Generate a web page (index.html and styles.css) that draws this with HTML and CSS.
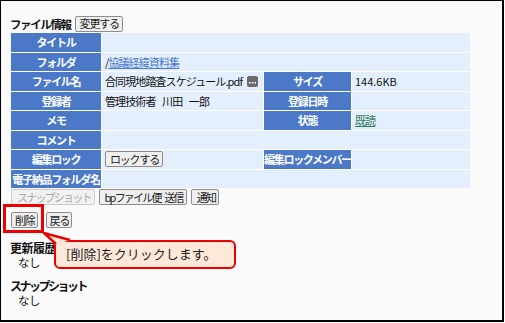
FILE: index.html
```html
<!DOCTYPE html>
<html lang="ja">
<head>
    <meta charset="UTF-8">
    <meta name="viewport" content="width=device-width, initial-scale=1.0">
    <title>ファイル情報</title>
    <link rel="stylesheet" href="styles.css">
</head>
<body>
    <div class="frame">
        <div class="head">
            <span class="head-title">ファイル情報</span>
            <button class="btn">変更する</button>
        </div>

        <div class="info">
            <div class="lbl">タイトル</div>
            <div class="val wide"></div>

            <div class="lbl">フォルダ</div>
            <div class="val wide">/<a class="link" href="#">協議経緯資料集</a></div>

            <div class="lbl">ファイル名</div>
            <div class="val">合同現地踏査スケジュール.pdf
                <svg class="more" width="11" height="11" viewBox="0 0 11 11">
                    <rect x="0" y="0" width="11" height="11" rx="2" fill="#6b6b6b"/>
                    <rect x="2" y="6" width="1.5" height="1.5" fill="#fff"/>
                    <rect x="4.75" y="6" width="1.5" height="1.5" fill="#fff"/>
                    <rect x="7.5" y="6" width="1.5" height="1.5" fill="#fff"/>
                </svg>
            </div>
            <div class="lbl">サイズ</div>
            <div class="val num">144.6KB</div>

            <div class="lbl">登録者</div>
            <div class="val">管理技術者 川田 一郎</div>
            <div class="lbl">登録日時</div>
            <div class="val"></div>

            <div class="lbl">メモ</div>
            <div class="val"></div>
            <div class="lbl">状態</div>
            <div class="val"><a class="link read" href="#">既読</a></div>

            <div class="lbl">コメント</div>
            <div class="val wide"></div>

            <div class="lbl">編集ロック</div>
            <div class="val"><button class="btn">ロックする</button></div>
            <div class="lbl">編集ロックメンバー</div>
            <div class="val"></div>

            <div class="lbl">電子納品フォルダ名</div>
            <div class="val wide"></div>
        </div>

        <div class="actions">
            <button class="btn" disabled>スナップショット</button>
            <button class="btn">bpファイル便 送信</button>
            <button class="btn">通知</button>
        </div>

        <div class="actions actions-main">
            <button class="btn">削除</button>
            <button class="btn">戻る</button>
        </div>

        <div class="sub">
            <h3>更新履歴</h3>
            <p>なし</p>
        </div>
        <div class="sub">
            <h3 class="kana">スナップショット</h3>
            <p>なし</p>
        </div>

        <!-- 操作説明のマーカー -->
        <div class="mark"></div>
        <svg class="tail" width="34" height="20" viewBox="0 0 34 20">
            <polygon points="2,1 14,13 28,8" fill="#fde8da"/>
            <polyline points="14,12 2,1 28,8" fill="none" stroke="#ee0000" stroke-width="2.4" stroke-linejoin="round"/>
        </svg>
        <div class="callout">[削除]をクリックします。</div>
    </div>
</body>
</html>
```

FILE: styles.css
```css
* {
    box-sizing: border-box;
}
body {
    margin: 0;
    font-family: "Noto Sans CJK JP", "Noto Sans", sans-serif;
    font-size: 11px;
    color: #111;
    background: #fff;
}
.frame {
    position: relative;
    width: 504px;
    height: 322px;
    border: 1px solid #000;
    border-right-width: 2px;
    border-bottom-width: 2px;
    background: #fafafa;
    padding: 14px 0 0 9px;
}
.head {
    display: flex;
    align-items: center;
    gap: 4px;
    height: 17px;
    margin-bottom: 1px;
}
.head-title {
    font-weight: bold;
    font-size: 11.5px;
    letter-spacing: -1.4px;
}
.btn {
    font-family: inherit;
    font-size: 11px;
    letter-spacing: -1.2px;
    word-spacing: 3px;
    line-height: 13px;
    height: 16px;
    padding: 0 3px 0 4px;
    color: #222;
    background: #efefef;
    border: 1px solid #8d8d8d;
    border-radius: 2px;
}
.btn:disabled {
    color: #a8a8a8;
    border-color: #cdcdcd;
    background: #f1f1f1;
}
.info {
    display: grid;
    grid-template-columns: 90px 161px 87px 118px;
    grid-auto-rows: 18.5px;
    gap: 1px;
    width: 459px;
    margin-left: 1px;
    background: #fff;
}
.lbl {
    background: #4b79c8;
    color: #fff;
    font-weight: bold;
    font-size: 11px;
    text-align: center;
    line-height: 18.5px;
    white-space: nowrap;
    letter-spacing: -1.3px;
}
.val {
    background: #e3effd;
    padding-left: 3px;
    font-size: 11px;
    letter-spacing: -0.9px;
    word-spacing: 5px;
    line-height: 18.5px;
    white-space: nowrap;
    display: flex;
    align-items: center;
    gap: 5px;
}
.val.num {
    letter-spacing: 0;
}
.wide {
    grid-column: span 3;
    gap: 0;
}
.link {
    color: #4a78d0;
    text-decoration: underline;
}
.read {
    color: #2f7d57;
}
.more {
    flex: none;
}
.actions {
    display: flex;
    gap: 4px;
    margin: 1px 0 0 1px;
}
.actions .btn {
    letter-spacing: -1.8px;
    padding: 0 3px 0 5px;
}
.actions-main {
    gap: 8px;
    margin-top: 7px;
}
.actions-main .btn {
    letter-spacing: -1.2px;
    padding: 0 2px 0 3px;
}
.sub {
    margin-top: 13px;
}
.sub + .sub {
    margin-top: 10px;
}
.sub h3 {
    margin: 0;
    font-size: 12px;
    line-height: 14px;
    letter-spacing: -0.5px;
}
.sub h3.kana {
    letter-spacing: -2.5px;
}
.sub p {
    margin: 0 0 0 8px;
    font-size: 11.5px;
    letter-spacing: -0.5px;
    line-height: 14px;
}
.mark {
    position: absolute;
    left: 2px;
    top: 203px;
    width: 41px;
    height: 29px;
    border: 3px solid #ee0000;
}
.callout {
    position: absolute;
    left: 53px;
    top: 239px;
    width: 182px;
    height: 29px;
    border: 2.5px solid #ee0000;
    border-radius: 6px;
    background: #fde8da;
    padding-left: 10px;
    font-size: 13px;
    line-height: 24px;
    color: #222;
}
.tail {
    position: absolute;
    left: 41px;
    top: 231px;
    z-index: 2;
}
```
